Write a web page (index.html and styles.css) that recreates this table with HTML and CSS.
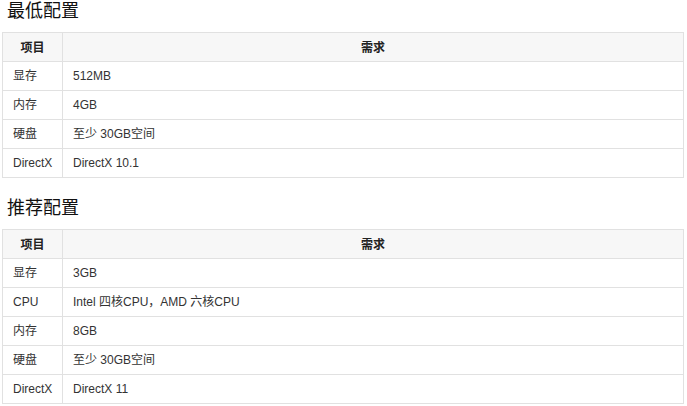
FILE: index.html
```html
<!DOCTYPE html>
<html lang="zh-CN">
<head>
<meta charset="utf-8">
<title>配置需求</title>
<link rel="stylesheet" href="styles.css">
</head>
<body>
<div class="page">
  <section class="spec">
    <h2 class="spec-title">最低配置</h2>
    <table class="spec-table">
      <colgroup><col class="col-item"><col class="col-req"></colgroup>
      <thead>
        <tr><th>项目</th><th>需求</th></tr>
      </thead>
      <tbody>
        <tr><td>显存</td><td>512MB</td></tr>
        <tr><td>内存</td><td>4GB</td></tr>
        <tr><td>硬盘</td><td>至少 30GB空间</td></tr>
        <tr><td>DirectX</td><td>DirectX 10.1</td></tr>
      </tbody>
    </table>
  </section>
  <section class="spec spec-second">
    <h2 class="spec-title">推荐配置</h2>
    <table class="spec-table">
      <colgroup><col class="col-item"><col class="col-req"></colgroup>
      <thead>
        <tr><th>项目</th><th>需求</th></tr>
      </thead>
      <tbody>
        <tr><td>显存</td><td>3GB</td></tr>
        <tr><td>CPU</td><td>Intel 四核CPU，AMD 六核CPU</td></tr>
        <tr><td>内存</td><td>8GB</td></tr>
        <tr><td>硬盘</td><td>至少 30GB空间</td></tr>
        <tr><td>DirectX</td><td>DirectX 11</td></tr>
      </tbody>
    </table>
  </section>
</div>
</body>
</html>
```

FILE: styles.css
```css
html, body {
  margin: 0;
  padding: 0;
  background: #ffffff;
}

body {
  font-family: "Liberation Sans", "Noto Sans CJK SC", sans-serif;
  color: #333333;
}

.page {
  padding: 0 3px 0 2px;
}

.spec-title {
  margin: 0;
  padding: 0 0 9px 5px;
  font-family: "Liberation Sans", "Noto Sans CJK SC", sans-serif;
  font-size: 18px;
  line-height: 23px;
  font-weight: normal;
  color: #111111;
}

.spec-second {
  margin-top: 19px;
}

.spec-table {
  width: 682px;
  border-collapse: collapse;
  table-layout: fixed;
  border: 1px solid #e1e1e1;
  font-size: 12px;
  line-height: 18px;
}

.col-item {
  width: 60px;
}

.spec-table th,
.spec-table td {
  border: 1px solid #e1e1e1;
  padding: 5px 10px;
  text-align: left;
  white-space: nowrap;
}

.spec-table th {
  background: #f7f7f7;
  font-family: "Noto Sans CJK SC", sans-serif;
  font-weight: bold;
  text-align: center;
  color: #222222;
}

.spec-table td {
  color: #333333;
}
```
